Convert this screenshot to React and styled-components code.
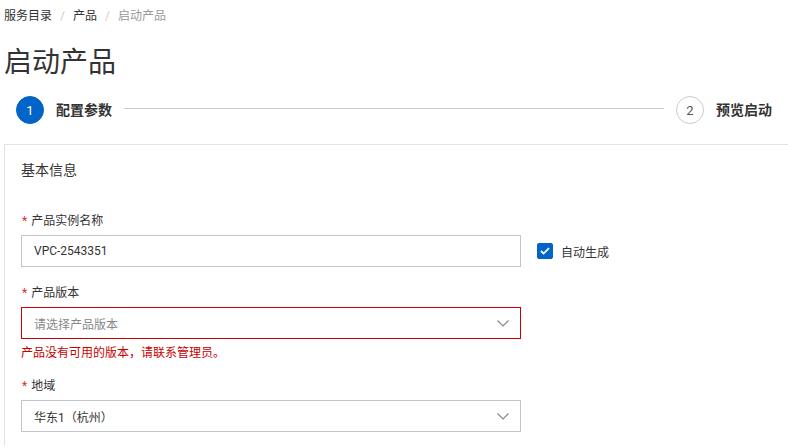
import React, { useState } from "react";
import styled, { createGlobalStyle } from "styled-components";

const GlobalStyle = createGlobalStyle`
  body {
    margin: 0;
    background: #fff;
    overflow: hidden;
    font-family: "Segoe UI", Roboto, "Noto Sans CJK SC", sans-serif;
    color: #333;
  }
`;

const Page = styled.div`
  padding-left: 4px;
  margin-right: -4px;
`;

const Breadcrumb = styled.div`
  display: flex;
  align-items: center;
  height: 32px;
  font-size: 12px;
  line-height: 16px;
`;

const Crumb = styled.span`
  color: ${(p) => (p.current ? "#999" : "#333")};
`;

const Sep = styled.span`
  color: #ccc;
  margin: 0 8px;
`;

const Title = styled.h1`
  margin: 13px 0 0;
  font-size: 28px;
  line-height: 36px;
  font-weight: 400;
  color: #333;
`;

const Steps = styled.div`
  display: flex;
  align-items: center;
  margin-top: 15px;
  padding: 0 20px 0 12px;
  height: 28px;
`;

const Step = styled.div`
  display: flex;
  align-items: center;
  gap: 12px;
  flex: none;
`;

const Circle = styled.span`
  width: 28px;
  height: 28px;
  box-sizing: border-box;
  border-radius: 50%;
  display: flex;
  align-items: center;
  justify-content: center;
  font-size: 13px;
  font-family: Roboto, sans-serif;
  background: ${(p) => (p.active ? "#0064c8" : "#fff")};
  color: ${(p) => (p.active ? "#fff" : "#555")};
  border: 1px solid ${(p) => (p.active ? "#0064c8" : "#c8ccd0")};
`;

const StepLabel = styled.span`
  font-size: 14px;
  font-weight: 700;
  color: #333;
  line-height: 20px;
`;

const StepLine = styled.div`
  flex: 1;
  height: 1px;
  background: #c8ccd0;
  margin: 0 12px;
  position: relative;
  top: -2px;
`;

const Card = styled.div`
  margin-top: 20px;
  border: 1px solid #e3e3e3;
  border-bottom: none;
  padding: 15px 16px 14px;
`;

const SectionTitle = styled.div`
  font-size: 14px;
  line-height: 20px;
  color: #333;
  margin-bottom: 33px;
`;

const Item = styled.div`
  margin-bottom: ${(p) => p.gap ?? 18}px;
`;

const Label = styled.div`
  font-size: 12px;
  line-height: 16px;
  color: #333;
  margin-bottom: 6px;
  &::before {
    content: "*";
    color: #d93026;
    margin: 0 4px 0 1px;
  }
`;

const Row = styled.div`
  display: flex;
  align-items: center;
  gap: 16px;
`;

const Field = styled.div`
  width: 500px;
  height: 32px;
  box-sizing: border-box;
  border: 1px solid ${(p) => (p.error ? "#c80000" : "#c0c6cc")};
  display: flex;
  align-items: center;
  justify-content: space-between;
  padding: 0 10px 0 12px;
  font-size: 12px;
  color: ${(p) => (p.placeholder ? "#888" : "#333")};
`;

const Check = styled.label`
  display: flex;
  align-items: center;
  gap: 8px;
  font-size: 12px;
  color: #333;
  cursor: pointer;
`;

const Box = styled.span`
  width: 16px;
  height: 16px;
  border-radius: 2px;
  background: ${(p) => (p.on ? "#0064c8" : "#fff")};
  border: 1px solid ${(p) => (p.on ? "#0064c8" : "#c0c6cc")};
  box-sizing: border-box;
  display: flex;
  align-items: center;
  justify-content: center;
`;

const ErrorText = styled.div`
  font-size: 12px;
  line-height: 16px;
  color: #c80000;
  margin-top: 6px;
`;

const Chevron = () => (
  <svg width="14" height="14" viewBox="0 0 14 14" fill="none">
    <path d="M1.5 4.5 7 10l5.5-5.5" stroke="#888" strokeWidth="1.2" />
  </svg>
);

const App = () => {
  const [auto, setAuto] = useState(true);

  return (
    <Page>
      <GlobalStyle />
      <Breadcrumb>
        <Crumb>服务目录</Crumb>
        <Sep>/</Sep>
        <Crumb>产品</Crumb>
        <Sep>/</Sep>
        <Crumb current>启动产品</Crumb>
      </Breadcrumb>
      <Title>启动产品</Title>
      <Steps>
        <Step>
          <Circle active>1</Circle>
          <StepLabel>配置参数</StepLabel>
        </Step>
        <StepLine />
        <Step>
          <Circle>2</Circle>
          <StepLabel>预览启动</StepLabel>
        </Step>
      </Steps>
      <Card>
        <SectionTitle>基本信息</SectionTitle>
        <Item>
          <Label>产品实例名称</Label>
          <Row>
            <Field>VPC-2543351</Field>
            <Check onClick={() => setAuto(!auto)}>
              <Box on={auto}>
                {auto && (
                  <svg width="10" height="8" viewBox="0 0 10 8">
                    <path d="M1 4l2.6 2.6L9 1.2" stroke="#fff" strokeWidth="1.8" fill="none" />
                  </svg>
                )}
              </Box>
              自动生成
            </Check>
          </Row>
        </Item>
        <Item gap={17}>
          <Label>产品版本</Label>
          <Field error placeholder>
            请选择产品版本
            <Chevron />
          </Field>
          <ErrorText>产品没有可用的版本，请联系管理员。</ErrorText>
        </Item>
        <Item gap={0}>
          <Label>地域</Label>
          <Field>
            华东1（杭州）
            <Chevron />
          </Field>
        </Item>
      </Card>
    </Page>
  );
};

export default App;
